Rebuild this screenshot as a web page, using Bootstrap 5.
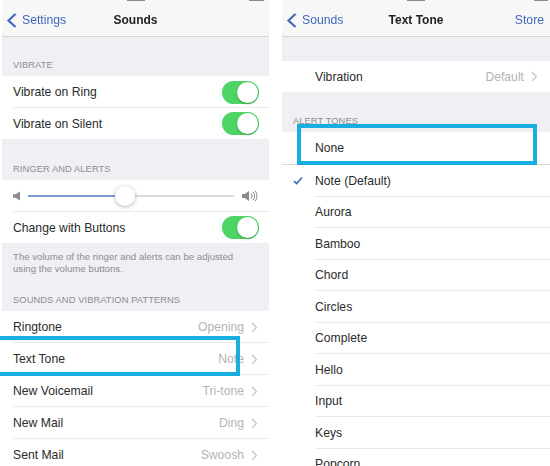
<!DOCTYPE html>
<html lang="en">
<head>
<meta charset="utf-8">
<title>Sounds</title>
<link href="https://cdn.jsdelivr.net/npm/bootstrap@5.3.0/dist/css/bootstrap.min.css" rel="stylesheet">
<style>
html,body{height:466px;overflow:hidden;background:#fff}
body{font-family:"Liberation Sans",Arial,sans-serif;font-size:12.2px;color:#2b2b2b}
.stage{height:466px;overflow:hidden;position:relative}
.phone{overflow:hidden;height:466px;filter:blur(.35px)}
.phone>*{flex:none}
.phone-a{width:267px;margin-left:2px}
.phone-b{width:268px;margin-left:13px}
.topbar{height:37px;background:#f7f7f8;border-bottom:1px solid #d4d4d6;position:relative}
.topbar .ttl{position:absolute;left:0;right:0;top:12px;text-align:center;font-weight:700;font-size:12px;line-height:17px;color:#222}
.back{color:#3f68b8;font-size:12.2px;line-height:17px;position:absolute;top:12px}
.back svg{position:absolute;left:-17px;top:0}
.sliver{position:absolute;top:0;height:1px;background:#8c8c8c}
.gband{background:#efeff4;display:flex;flex-direction:column;justify-content:flex-end;padding:0 11px 5px;font-size:9.3px;line-height:12px;color:#8d8d93;letter-spacing:.1px}
.note{justify-content:flex-start;font-size:9.6px;line-height:12px;padding-top:8px;padding-bottom:0;letter-spacing:.02px}
.note .lbl{margin-top:auto;padding-bottom:5px;font-size:9.3px;letter-spacing:.1px}
.rowa{height:32px;display:flex;align-items:center;position:relative;padding:0 11px;background:#fff;line-height:16px}
.rowa::after{content:"";position:absolute;left:11px;right:0;bottom:0;height:1px;background:#eaeaec}
.rowa.last::after{display:none}
.rowb{padding-left:33px;padding-right:12px;height:31.5px}
.rowb::after{left:33px}
.val{color:#b4b4b8;margin-left:auto;margin-right:7px}
.swi{width:37px;height:23px;border-radius:12px;background:#4cd464;margin-left:auto;margin-right:-1px;position:relative;flex:none}
.swi::after{content:"";position:absolute;right:1px;top:1px;width:21px;height:21px;border-radius:50%;background:#fff;box-shadow:0 1px 2px rgba(0,0,0,.3)}
.track{flex:1;height:2px;background:#dcdce0;margin:0 8px 0 6px;position:relative}
.track i{position:absolute;left:0;top:0;height:2px;width:47%;background:#7c9bd0}
.track b{position:absolute;left:47%;top:-9px;margin-left:-10px;width:20px;height:20px;border-radius:50%;background:#fff;box-shadow:0 1px 4px rgba(0,0,0,.3)}
.hl{position:absolute;border:4px solid #19aee0;pointer-events:none}
.hl-a{left:-4px;top:336px;width:244px;height:39.5px}
.hl-b{left:297px;top:124px;width:240px;height:41px}
.chk{position:absolute;left:11px;top:11px}
</style>
</head>
<body>
<div class="stage d-flex">
  <div class="phone phone-a d-flex flex-column">
    <div class="topbar">
      <div class="sliver" style="left:125px;width:18px"></div>
      <div class="sliver" style="left:247px;width:15px"></div>
      <span class="back" style="left:20px"><svg width="12" height="17" viewBox="0 0 12 17"><path d="M10.5 2 L3.5 8.5 L10.5 15" fill="none" stroke="#3f68b8" stroke-width="2.2"/></svg>Settings</span>
      <div class="ttl">Sounds</div>
    </div>
    <div class="gband" style="height:39px">VIBRATE</div>
    <div class="rowa" style="height:32px"><span>Vibrate on Ring</span><span class="swi"></span></div>
    <div class="rowa last" style="height:31px"><span>Vibrate on Silent</span><span class="swi"></span></div>
    <div class="gband" style="height:41px">RINGER AND ALERTS</div>
    <div class="rowa">
      <svg width="9" height="10" viewBox="0 0 9 10"><path d="M0 3.2h2.6L7 .5v9L2.6 6.8H0z" fill="#8a8a8e"/></svg>
      <div class="track"><i></i><b></b></div>
      <svg width="16" height="12" viewBox="0 0 16 12"><path d="M0 4h2.8L7 1v10L2.8 8H0z" fill="#8a8a8e"/><path d="M9 3.5a3.5 3.5 0 0 1 0 5M11 2a6 6 0 0 1 0 8M13 .7a8 8 0 0 1 0 10.6" fill="none" stroke="#8a8a8e"/></svg>
    </div>
    <div class="rowa last" style="height:31px"><span>Change with Buttons</span><span class="swi"></span></div>
    <div class="gband note" style="height:68px"><div>The volume of the ringer and alerts can be adjusted<br>using the volume buttons.</div><div class="lbl">SOUNDS AND VIBRATION PATTERNS</div></div>
    <div class="rowa"><span>Ringtone</span><span class="val">Opening</span><svg width="7" height="11" viewBox="0 0 7 11"><path d="M1 1l4.5 4.5L1 10" fill="none" stroke="#c4c4c8" stroke-width="1.2"/></svg></div>
    <div class="rowa"><span>Text Tone</span><span class="val">Note</span><svg width="7" height="11" viewBox="0 0 7 11"><path d="M1 1l4.5 4.5L1 10" fill="none" stroke="#c4c4c8" stroke-width="1.2"/></svg></div>
    <div class="rowa"><span>New Voicemail</span><span class="val">Tri-tone</span><svg width="7" height="11" viewBox="0 0 7 11"><path d="M1 1l4.5 4.5L1 10" fill="none" stroke="#c4c4c8" stroke-width="1.2"/></svg></div>
    <div class="rowa"><span>New Mail</span><span class="val">Ding</span><svg width="7" height="11" viewBox="0 0 7 11"><path d="M1 1l4.5 4.5L1 10" fill="none" stroke="#c4c4c8" stroke-width="1.2"/></svg></div>
    <div class="rowa last"><span>Sent Mail</span><span class="val">Swoosh</span><svg width="7" height="11" viewBox="0 0 7 11"><path d="M1 1l4.5 4.5L1 10" fill="none" stroke="#c4c4c8" stroke-width="1.2"/></svg></div>
  </div>
  <div class="phone phone-b d-flex flex-column">
    <div class="topbar">
      <div class="sliver" style="left:125px;width:18px"></div>
      <div class="sliver" style="left:252px;width:14px"></div>
      <span class="back" style="left:20px"><svg width="12" height="17" viewBox="0 0 12 17"><path d="M10.5 2 L3.5 8.5 L10.5 15" fill="none" stroke="#3f68b8" stroke-width="2.2"/></svg>Sounds</span>
      <div class="ttl">Text Tone</div>
      <span class="back" style="right:6px">Store</span>
    </div>
    <div class="gband" style="height:24px"></div>
    <div class="rowa rowb last" style="height:31px"><span>Vibration</span><span class="val">Default</span><svg width="7" height="11" viewBox="0 0 7 11"><path d="M1 1l4.5 4.5L1 10" fill="none" stroke="#c4c4c8" stroke-width="1.2"/></svg></div>
    <div class="gband" style="height:40px">ALERT TONES</div>
    <div class="rowa rowb last" style="height:33px;border-bottom:1px solid #d8d8da"><span>None</span></div>
    <div class="rowa rowb"><svg class="chk" width="10" height="9" viewBox="0 0 10 9"><path d="M1 5l2.6 2.6L9 1.5" fill="none" stroke="#3f68b8" stroke-width="1.6"/></svg><span>Note (Default)</span></div>
    <div class="rowa rowb"><span>Aurora</span></div>
    <div class="rowa rowb"><span>Bamboo</span></div>
    <div class="rowa rowb"><span>Chord</span></div>
    <div class="rowa rowb"><span>Circles</span></div>
    <div class="rowa rowb"><span>Complete</span></div>
    <div class="rowa rowb"><span>Hello</span></div>
    <div class="rowa rowb"><span>Input</span></div>
    <div class="rowa rowb"><span>Keys</span></div>
    <div class="rowa rowb last"><span>Popcorn</span></div>
  </div>
  <div class="hl hl-a"></div>
  <div class="hl hl-b"></div>
</div>
<script src="https://cdn.jsdelivr.net/npm/bootstrap@5.3.0/dist/js/bootstrap.bundle.min.js"></script>
</body>
</html>
